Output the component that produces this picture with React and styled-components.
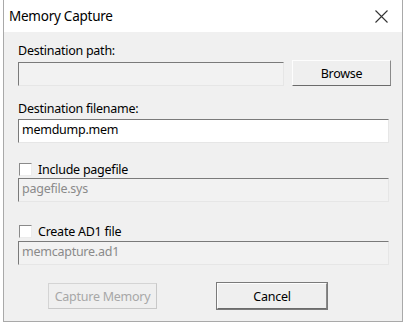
import React from 'react'
import styled, { createGlobalStyle } from 'styled-components'

const GlobalStyle = createGlobalStyle`
  html, body {
    margin: 0;
    padding: 0;
    background: #ffffff;
  }
  body {
    font-family: 'Noto Sans', 'Liberation Sans', sans-serif;
    color: #000;
    letter-spacing: -0.25px;
  }
`

const Window = styled.div`
  width: 400px;
  height: 322px;
  margin-left: 3px;
  box-sizing: border-box;
  border: 1px solid #a9a9a9;
  border-top: none;
  display: flex;
  flex-direction: column;
  background: #f0f0f0;
`

const TitleBar = styled.div`
  height: 32px;
  flex: 0 0 32px;
  background: #ffffff;
  display: flex;
  align-items: center;
  justify-content: space-between;
  padding: 0 14px 0 5px;
  box-sizing: border-box;
`

const Title = styled.span`
  font-size: 13.5px;
  color: #000;
  margin-top: -1px;
`

const CloseIcon = () => (
  <svg width="13" height="13" viewBox="0 0 13 13">
    <path d="M0.5 0.5 L12.5 12.5 M12.5 0.5 L0.5 12.5" stroke="#333" strokeWidth="1.1" fill="none" />
  </svg>
)

const Body = styled.div`
  flex: 1;
  padding: 11px 13px 0 14px;
  display: flex;
  flex-direction: column;
`

const Label = styled.div`
  font-size: 12.5px;
  line-height: 16px;
  height: 16px;
  margin-top: ${p => p.$top || 0}px;
`

const Row = styled.div`
  display: flex;
  align-items: flex-start;
  gap: 8px;
  margin-top: ${p => p.$top || 0}px;
`

const Field = styled.div`
  box-sizing: border-box;
  height: 24px;
  width: ${p => (p.$width ? `${p.$width}px` : '100%')};
  margin-top: ${p => p.$top || 0}px;
  border-top: 1px solid #7a7a7a;
  border-left: 1px solid #7a7a7a;
  border-right: 1px solid #e6e6e6;
  border-bottom: 1px solid #e6e6e6;
  background: ${p => (p.$disabled ? '#f2f2f2' : '#ffffff')};
  color: ${p => (p.$disabled ? '#8a8a8a' : '#000')};
  font-size: 12.5px;
  line-height: 20px;
  padding-left: 3px;
  flex-shrink: 0;
`

const Button = styled.div`
  box-sizing: border-box;
  width: ${p => p.$width}px;
  height: ${p => p.$height || 26}px;
  margin-top: ${p => p.$top || 0}px;
  background: #efefef;
  display: flex;
  align-items: center;
  justify-content: center;
  font-size: 12.5px;
  flex-shrink: 0;
  color: ${p => (p.$disabled ? '#a7a7a7' : '#000')};
  border: 1px solid ${p => (p.$disabled ? '#d4d4d4' : '#fdfdfd')};
  border-right-color: ${p => (p.$disabled ? '#c8c8c8' : '#8a8a8a')};
  border-bottom-color: ${p => (p.$disabled ? '#c8c8c8' : '#6b6b6b')};
  box-shadow: ${p => (p.$outlined ? '0 0 0 1px #7a7a7a' : 'none')};
`

const CheckRow = styled.div`
  display: flex;
  align-items: center;
  gap: 6px;
  margin-top: ${p => p.$top || 0}px;
  height: 16px;
  font-size: 12.5px;
`

const Box = styled.span`
  box-sizing: border-box;
  width: 13px;
  height: 13px;
  margin-left: 1px;
  background: #ffffff;
  border-top: 1px solid #8a8a8a;
  border-left: 1px solid #8a8a8a;
  border-right: 1px solid #ececec;
  border-bottom: 1px solid #ececec;
`

const ButtonBar = styled.div`
  display: flex;
  gap: 60px;
  padding-left: 30px;
  margin-top: 18px;
`

export default function App() {
  return (
    <>
      <GlobalStyle />
      <Window>
        <TitleBar>
          <Title>Memory Capture</Title>
          <CloseIcon />
        </TitleBar>
        <Body>
          <Label>Destination path:</Label>
          <Row $top={1}>
            <Field $disabled $width={266} $top={2} />
            <Button $width={99}>Browse</Button>
          </Row>
          <Label $top={15}>Destination filename:</Label>
          <Field $top={2}>memdump.mem</Field>
          <CheckRow $top={18}>
            <Box />
            <span>Include pagefile</span>
          </CheckRow>
          <Field $disabled $top={1}>pagefile.sys</Field>
          <CheckRow $top={21}>
            <Box />
            <span>Create AD1 file</span>
          </CheckRow>
          <Field $disabled $top={2}>memcapture.ad1</Field>
          <ButtonBar>
            <Button $width={109} $height={26} $disabled>Capture Memory</Button>
            <Button $width={110} $height={26} $outlined>Cancel</Button>
          </ButtonBar>
        </Body>
      </Window>
    </>
  )
}
